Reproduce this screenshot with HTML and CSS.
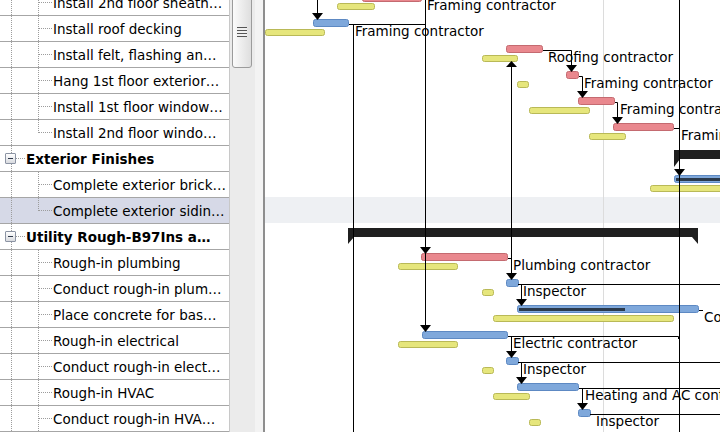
FILE: index.html
```html
<!DOCTYPE html>
<html>
<head>
<meta charset="utf-8">
<link rel="stylesheet" href="styles.css">
</head>
<body>
<div class="app">
  <div class="tree">
    <div class="rows">
      <div class="row child"><span class="txt">Install 2nd floor sheath…</span></div>
      <div class="row child"><span class="txt">Install roof decking</span></div>
      <div class="row child"><span class="txt">Install felt, flashing an…</span></div>
      <div class="row child"><span class="txt">Hang 1st floor exterior…</span></div>
      <div class="row child"><span class="txt">Install 1st floor window…</span></div>
      <div class="row child last"><span class="txt">Install 2nd floor windo…</span></div>
      <div class="row group"><span class="box"></span><span class="txt">Exterior Finishes</span></div>
      <div class="row child"><span class="txt">Complete exterior brick…</span></div>
      <div class="row child last sel"><span class="txt">Complete exterior sidin…</span></div>
      <div class="row group"><span class="box"></span><span class="txt">Utility Rough-B97Ins a…</span></div>
      <div class="row child"><span class="txt">Rough-in plumbing</span></div>
      <div class="row child"><span class="txt">Conduct rough-in plum…</span></div>
      <div class="row child"><span class="txt">Place concrete for bas…</span></div>
      <div class="row child"><span class="txt">Rough-in electrical</span></div>
      <div class="row child"><span class="txt">Conduct rough-in elect…</span></div>
      <div class="row child"><span class="txt">Rough-in HVAC</span></div>
      <div class="row child"><span class="txt">Conduct rough-in HVA…</span></div>
      <div class="row child"><span class="txt"></span></div>
    </div>
  </div>
  <div class="vscroll"><div class="thumb"><span class="grip"></span></div></div>
  <div class="splitter"></div>
  <div class="chart">
    <svg class="gantt" width="455" height="432" viewBox="265 0 455 432" xmlns="http://www.w3.org/2000/svg">
      <rect class="band" x="265" y="197" width="455" height="26"/>
      <line class="grid" x1="603.5" y1="0" x2="603.5" y2="432"/>

      <!-- baseline (yellow) bars -->
      <rect class="by" x="337.5" y="3.5" width="37" height="6" rx="2"/>
      <rect class="by" x="265.5" y="29.5" width="59" height="6" rx="2"/>
      <rect class="by" x="482.5" y="55.5" width="35" height="6" rx="2"/>
      <rect class="by" x="517.5" y="81.5" width="11" height="6" rx="2"/>
      <rect class="by" x="529.5" y="107.5" width="60" height="6" rx="2"/>
      <rect class="by" x="589.5" y="133.5" width="36" height="6" rx="2"/>
      <rect class="by" x="650.5" y="185.5" width="80" height="6" rx="2"/>
      <rect class="by" x="398.5" y="263.5" width="59" height="6" rx="2"/>
      <rect class="by" x="482.5" y="289.5" width="11" height="6" rx="2"/>
      <rect class="by" x="493.5" y="315.5" width="180" height="6" rx="2"/>
      <rect class="by" x="398.5" y="341.5" width="59" height="6" rx="2"/>
      <rect class="by" x="482.5" y="367.5" width="11" height="6" rx="2"/>
      <rect class="by" x="493.5" y="393.5" width="36" height="6" rx="2"/>
      <rect class="by" x="529.5" y="419.5" width="11" height="6" rx="2"/>

      <!-- task bars -->
      <rect class="br" x="362.5" y="-5.5" width="59" height="7" rx="2"/>
      <rect class="bb" x="313.5" y="19.5" width="35" height="7" rx="2"/>
      <rect class="br" x="506.5" y="45.5" width="36" height="7" rx="2"/>
      <rect class="br" x="566.5" y="71.5" width="12" height="7" rx="2"/>
      <rect class="br" x="578.5" y="97.5" width="36" height="7" rx="2"/>
      <rect class="br" x="613.5" y="123.5" width="60" height="7" rx="2"/>
      <rect class="bb" x="674.5" y="175.5" width="60" height="7" rx="2"/>
      <rect class="pg" x="676" y="178" width="60" height="3"/>
      <rect class="br" x="421.5" y="253.5" width="86" height="7" rx="2"/>
      <rect class="bb" x="506.5" y="279.5" width="12" height="7" rx="2"/>
      <rect class="bb" x="517.5" y="305.5" width="181" height="7" rx="2"/>
      <rect class="pg" x="519" y="308" width="106" height="3"/>
      <rect class="bb" x="422.5" y="331.5" width="85" height="7" rx="2"/>
      <rect class="bb" x="506.5" y="357.5" width="12" height="7" rx="2"/>
      <rect class="bb" x="517.5" y="383.5" width="61" height="7" rx="2"/>
      <rect class="bb" x="578.5" y="409.5" width="12" height="7" rx="2"/>

      <!-- summary bars -->
      <polygon class="sum" points="674,150 722,150 722,159 680,159 674,167"/>
      <polygon class="sum" points="348,228 698,228 698,244 692,237 354,237 348,244"/>

      <!-- dependency lines -->
      <line class="ln" x1="317.5" y1="0" x2="317.5" y2="14"/>
      <line class="ln" x1="421" y1="-1.5" x2="425.5" y2="-1.5"/>
      <line class="ln" x1="425.5" y1="-2" x2="425.5" y2="326"/>
      <line class="ln" x1="349" y1="24.5" x2="425" y2="24.5"/>
      <line class="ln" x1="353.5" y1="24.5" x2="353.5" y2="432"/>
      <line class="ln" x1="543" y1="50.5" x2="571.5" y2="50.5"/>
      <line class="ln" x1="571.5" y1="50.5" x2="571.5" y2="66"/>
      <line class="ln" x1="511.5" y1="66" x2="511.5" y2="274"/>
      <line class="ln" x1="579" y1="76.5" x2="582.5" y2="76.5"/>
      <line class="ln" x1="582.5" y1="76.5" x2="582.5" y2="92"/>
      <line class="ln" x1="615" y1="102.5" x2="617.5" y2="102.5"/>
      <line class="ln" x1="617.5" y1="102.5" x2="617.5" y2="118"/>
      <line class="ln" x1="674" y1="128.5" x2="679.5" y2="128.5"/>
      <line class="ln" x1="679.5" y1="0" x2="679.5" y2="432"/>
      <line class="ln" x1="508" y1="258.5" x2="511.5" y2="258.5"/>
      <line class="ln" x1="518" y1="284.5" x2="720" y2="284.5"/>
      <line class="ln" x1="521.5" y1="284.5" x2="521.5" y2="300"/>
      <line class="ln" x1="699" y1="310.5" x2="703" y2="310.5"/>
      <line class="ln" x1="508" y1="336.5" x2="678.5" y2="336.5"/>
      <line class="ln" x1="678.5" y1="336.5" x2="678.5" y2="339"/>
      <line class="ln" x1="511.5" y1="336.5" x2="511.5" y2="352"/>
      <line class="ln" x1="518" y1="362.5" x2="720" y2="362.5"/>
      <line class="ln" x1="521.5" y1="362.5" x2="521.5" y2="378"/>
      <line class="ln" x1="579" y1="388.5" x2="720" y2="388.5"/>
      <line class="ln" x1="582.5" y1="388.5" x2="582.5" y2="404"/>
      <line class="ln" x1="590" y1="414.5" x2="720" y2="414.5"/>

      <!-- arrows -->
      <polygon class="arr" points="312,13 323,13 317.5,20"/>
      <polygon class="arr" points="506,67 517,67 511.5,61"/>
      <polygon class="arr" points="566,65 577,65 571.5,72"/>
      <polygon class="arr" points="577,91 588,91 582.5,98"/>
      <polygon class="arr" points="612,117 623,117 617.5,124"/>
      <polygon class="arr" points="674,169 685,169 679.5,176"/>
      <polygon class="arr" points="420,247 431,247 425.5,254"/>
      <polygon class="arr" points="506,273 517,273 511.5,280"/>
      <polygon class="arr" points="516,299 527,299 521.5,306"/>
      <polygon class="arr" points="420,325 431,325 425.5,332"/>
      <polygon class="arr" points="506,351 517,351 511.5,358"/>
      <polygon class="arr" points="516,377 527,377 521.5,384"/>
      <polygon class="arr" points="577,403 588,403 582.5,410"/>

      <!-- resource labels -->
      <text class="lbl" x="427" y="9.5">Framing contractor</text>
      <text class="lbl" x="355" y="35.5">Framing contractor</text>
      <text class="lbl" x="548" y="61.5">Roofing contractor</text>
      <text class="lbl" x="584" y="87.5">Framing contractor</text>
      <text class="lbl" x="620" y="113.5">Framing contractor</text>
      <text class="lbl" x="681" y="139.5">Framing contractor</text>
      <text class="lbl" x="513" y="269.5">Plumbing contractor</text>
      <text class="lbl" x="523" y="295.5">Inspector</text>
      <text class="lbl" x="704" y="321.5">Concrete contractor</text>
      <text class="lbl" x="513" y="347.5">Electric contractor</text>
      <text class="lbl" x="523" y="373.5">Inspector</text>
      <text class="lbl" x="585" y="399.5">Heating and AC contractor</text>
      <text class="lbl" x="596" y="425.5">Inspector</text>
    </svg>
  </div>
</div>
</body>
</html>
```
FILE: styles.css
```css
html, body {
  margin: 0;
  padding: 0;
  width: 720px;
  height: 432px;
  overflow: hidden;
  background: #fff;
}
body {
  font-family: "DejaVu Sans", Verdana, sans-serif;
  font-size: 13.5px;
  color: #000;
}
.app {
  display: flex;
  width: 720px;
  height: 432px;
  overflow: hidden;
}
.tree {
  width: 229px;
  flex: none;
  overflow: hidden;
  border-right: 1px solid #c8c8c8;
}
.rows {
  margin-top: -10px;
}
.row {
  height: 25px;
  border-bottom: 1px solid #a6a6a6;
  display: flex;
  align-items: center;
  white-space: nowrap;
  overflow: hidden;
  background-repeat: no-repeat;
}
.txt {
  overflow: hidden;
  white-space: nowrap;
}
.child {
  padding-left: 53px;
  background-image:
    repeating-linear-gradient(to right, #9c9c9c 0 1px, transparent 1px 2px),
    repeating-linear-gradient(to bottom, #9c9c9c 0 1px, transparent 1px 2px),
    repeating-linear-gradient(to bottom, #9c9c9c 0 1px, transparent 1px 2px);
  background-size: 14px 1px, 1px 100%, 1px 100%;
  background-position: 39px 12px, 38px 0, 11px 0;
}
.child.last {
  background-size: 14px 1px, 1px 13px, 1px 100%;
}
.sel {
  background-color: #d6d9e7;
}
.group {
  font-weight: bold;
  background-image:
    repeating-linear-gradient(to right, #9c9c9c 0 1px, transparent 1px 2px),
    repeating-linear-gradient(to bottom, #9c9c9c 0 1px, transparent 1px 2px);
  background-size: 9px 1px, 1px 100%;
  background-position: 16px 12px, 11px 0;
}
.box {
  flex: none;
  width: 11px;
  height: 11px;
  box-sizing: border-box;
  margin-left: 5px;
  margin-right: 10px;
  border: 1px solid #8c94a4;
  border-radius: 1px;
  background:
    linear-gradient(#2f3a4c, #2f3a4c) center / 5px 1px no-repeat,
    linear-gradient(#ffffff, #d9dbe0);
}
.vscroll {
  width: 25px;
  flex: none;
  background: #ebebeb;
  box-sizing: border-box;
  padding-left: 2px;
}
.thumb {
  width: 20px;
  height: 72px;
  margin-top: -4px;
  box-sizing: border-box;
  border: 1px solid #9b9b9b;
  border-radius: 3px;
  background: linear-gradient(to right, #fbfbfb, #dedede);
  display: flex;
  align-items: center;
  justify-content: center;
}
.grip {
  width: 10px;
  height: 10px;
  background: repeating-linear-gradient(to bottom, #555 0 1px, #f0f0f0 1px 3px);
}
.splitter {
  width: 8px;
  flex: none;
  background: #f3f3f3;
}
.chart {
  flex: 1;
  border-left: 2px solid #8e8e8e;
  overflow: hidden;
  background: #fff;
}
.gantt {
  display: block;
  overflow: hidden;
}
.band { fill: #eef0f3; }
.grid { stroke: #dcdcdc; stroke-width: 1; }
.by { fill: #e6e67c; stroke: #b9b957; stroke-width: 1; }
.br { fill: #e9888e; stroke: #c46a70; stroke-width: 1; }
.bb { fill: #7fa8db; stroke: #5d89c3; stroke-width: 1; }
.pg { fill: #2b3a4c; }
.sum { fill: #1f1f1f; }
.ln { stroke: #000; stroke-width: 1; }
.arr { fill: #000; }
.lbl {
  font-family: "DejaVu Sans", Verdana, sans-serif;
  font-size: 13.5px;
  fill: #000;
}
```
